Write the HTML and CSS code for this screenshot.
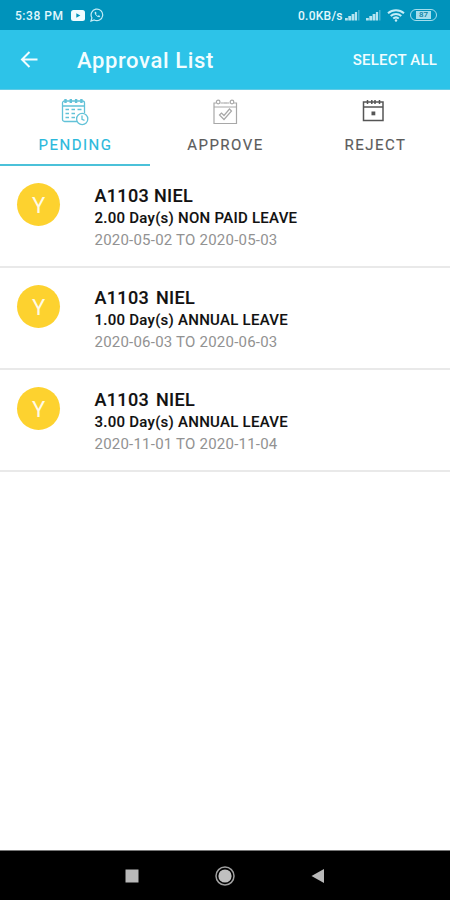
FILE: index.html
```html
<!DOCTYPE html>
<html lang="en">
<head>
<meta charset="utf-8">
<title>Approval List</title>
<link rel="stylesheet" href="styles.css">
</head>
<body>
<div class="status">
  <span class="clock">5:38 PM</span>
  <svg class="video" width="14" height="11" viewBox="0 0 14 11"><rect width="14" height="11" rx="2.5" fill="#f0fcff"/><path d="M5.3 3.2v4.6l4-2.3z" fill="#0093bb"/></svg>
  <svg class="chat" width="14" height="14" viewBox="0 0 14 14" fill="none" stroke="#c5edf7"><path d="M1 13l.9-3.2A5.8 5.8 0 1 1 4.2 12z" stroke-width="1.2"/><path d="M4.8 4.1c-.9 2 2.5 5.600 4.700 5.200l.8-1.200-1.700-.9-.8.700C6.900 7.500 6.200 6.600 6 6l.6-.8-.7-1.500z" fill="#c5edf7" stroke="none"/></svg>
  <span class="speed">0.0KB/s</span>
  <svg class="signal" width="15" height="12" viewBox="0 0 15 12" fill="#b5e4f0"><path d="M0 9h2.800v2.500H0zM3.300 7h2.800v4.500H3.300zM6.600 5h2.800v6.500H6.600zM9.900 3h2.200v8.500H9.900z"/><path d="M13 1h1.500v10.500H13z" opacity=".4"/></svg>
  <svg class="signal second" width="15" height="12" viewBox="0 0 15 12" fill="#b5e4f0"><path d="M0 9h2.800v2.500H0zM3.300 7h2.800v4.500H3.300zM6.600 5h2.800v6.500H6.600zM9.900 3h2.200v8.500H9.900z"/><path d="M13 1h1.500v10.500H13z" opacity=".4"/></svg>
  <svg class="wifi" width="18" height="13" viewBox="0 0 18 13" fill="none" stroke="#c5edf7" stroke-width="2"><path d="M1 4.300a12 12 0 0 1 16 0M3.700 7a8 8 0 0 1 10.600 0M6.200 9.600a4.200 4.200 0 0 1 5.600 0"/><circle cx="9" cy="11.500" r="1.200" fill="#c5edf7" stroke="none"/></svg>
  <span class="battery"><span class="level">87</span></span>
</div>
<header class="appbar">
  <svg class="back" width="18" height="18" viewBox="0 0 18 18" fill="none" stroke="#f2fdff" stroke-width="2"><path d="M17.500 8.500H2.500M9.500 1L2 8.500 9.500 16"/></svg>
  <h1 class="title">Approval List</h1>
  <span class="select">SELECT ALL</span>
</header>
<nav class="tabs">
  <div class="tab active">
    <svg class="icon" width="28" height="28" viewBox="0 0 28 28" fill="none" stroke="#62c2d8" stroke-width="1.300"><path d="M17 23.500H3.500a2 2 0 0 1-2-2V5a2 2 0 0 1 2-2h18a2 2 0 0 1 2 2v10M1.500 8h22"/><path d="M4.500 1v4M9.800 1v4M15.100 1v4M20.400 1v4" stroke-width="2.400"/><path d="M4.500 11.500h3.500M10.500 11.500h3.500M16.500 11.500h4M4.500 15.500h3.500M10.500 15.500h3.500M4.500 19.500h3.500M10.500 19.500h3.500" stroke-width="1.600"/><circle cx="21.200" cy="21" r="5.600" fill="#fff"/><path d="M21 17.500v3.800l2.500 1"/></svg>
    <span class="label">PENDING</span>
  </div>
  <div class="tab">
    <svg class="icon" width="28" height="28" viewBox="0 0 28 28" fill="none" stroke="#a8a8a8" stroke-width="1.200"><path d="M5 5H3v20.500h22.500V5H23M9.500 5h3M16 5h2.500M3 9h22.500"/><circle cx="7.200" cy="4" r="1.800"/><circle cx="21" cy="4" r="1.800"/><path d="M12.500 5h3.500"/><path d="M8.500 17l2-2 2.500 2.500 5.500-6.500 2 2-7.500 8.500z"/></svg>
    <span class="label">APPROVE</span>
  </div>
  <div class="tab">
    <svg class="icon reject" width="28" height="28" viewBox="0 0 28 28" fill="none" stroke="#555" stroke-width="1.500"><path d="M3.500 4h19.500v18.500H3.500zM3.500 9h19.500"/><path d="M7.500 2v4M11.800 2v4M15 2v4M19.500 2v4" stroke-width="1.500"/><rect x="11.500" y="13.500" width="3.800" height="3.800" fill="#555" stroke="none"/></svg>
    <span class="label">REJECT</span>
  </div>
</nav>
<main class="list">
  <article class="row">
    <span class="avatar">Y</span>
    <div class="info">
      <div class="name">A1103 <span>NIEL</span></div>
      <div class="leave">2.00 Day(s) NON PAID LEAVE</div>
      <div class="date">2020-05-02 TO 2020-05-03</div>
    </div>
  </article>
  <article class="row">
    <span class="avatar">Y</span>
    <div class="info">
      <div class="name wide">A1103 <span>NIEL</span></div>
      <div class="leave">1.00 Day(s) ANNUAL LEAVE</div>
      <div class="date">2020-06-03 TO 2020-06-03</div>
    </div>
  </article>
  <article class="row">
    <span class="avatar">Y</span>
    <div class="info">
      <div class="name wide">A1103 <span>NIEL</span></div>
      <div class="leave">3.00 Day(s) ANNUAL LEAVE</div>
      <div class="date">2020-11-01 TO 2020-11-04</div>
    </div>
  </article>
</main>
<footer class="navbar">
  <svg width="14" height="14" viewBox="0 0 14 14"><rect x=".5" y=".5" width="13" height="13" fill="#b9b9b9"/></svg>
  <svg width="20" height="20" viewBox="0 0 20 20"><circle cx="10" cy="10" r="9" fill="none" stroke="#a0a0a0" stroke-width="1.500"/><circle cx="10" cy="10" r="6.600" fill="#c0c0c0"/></svg>
  <svg width="14" height="16" viewBox="0 0 14 16"><path d="M13 1v14L.5 8z" fill="#b9b9b9"/></svg>
</footer>
</body>
</html>
```
FILE: styles.css
```css
* { box-sizing: border-box; }
body {
  margin: 0;
  width: 450px;
  height: 900px;
  display: flex;
  flex-direction: column;
  overflow: hidden;
  background: #fff;
  font-family: Roboto, "Liberation Sans", sans-serif;
  white-space: nowrap;
}
svg { display: block; flex: none; }
.status {
  height: 30px;
  flex: none;
  display: flex;
  align-items: center;
  padding: 0 13px 0 15px;
  background: #0093bb;
  color: #e2f8fd;
  font-size: 12px;
  font-weight: 500;
}
.clock { width: 56px; padding-top: 1px; letter-spacing: .55px; }
.chat { margin-left: 5px; }
.speed { margin-left: auto; width: 47px; padding-top: 1px; letter-spacing: .25px; }
.second { margin-left: 6px; }
.wifi { margin-left: 6px; }
.battery {
  width: 27px;
  height: 12px;
  margin-left: 5px;
  padding: 1px 5px;
  border: 1.5px solid #a5deed;
  border-radius: 6px;
}
.level {
  display: block;
  height: 8px;
  background: #a5deed;
  color: #0b7f9e;
  font-size: 8px;
  line-height: 8px;
  text-align: center;
}
.appbar {
  height: 60px;
  flex: none;
  display: flex;
  align-items: center;
  padding: 0 13px 0 20px;
  background: #2dc3e8;
  border-bottom: 1px solid #62cbe5;
  color: #f2fdff;
}
.title {
  margin: 2px 0 0 39px;
  font-size: 22px;
  font-weight: 500;
  letter-spacing: .62px;
}
.select { margin-left: auto; font-size: 15px; font-weight: 500; letter-spacing: .18px; }
.tabs { height: 76px; flex: none; display: flex; }
.tab {
  width: 150px;
  padding: 8px 0 0 1px;
  display: flex;
  flex-direction: column;
  align-items: center;
  border-bottom: 2px solid transparent;
  color: #5c5c5c;
}
.active { color: #2ab9dc; border-bottom-color: #4bc1d9; }
.icon { margin-right: 2px; }
.reject { margin-right: 4px; }
.label {
  margin-top: 10px;
  font-size: 15px;
  line-height: 18px;
  letter-spacing: 1.5px;
  -webkit-text-stroke: .15px currentColor;
}
.row {
  height: 102px;
  display: flex;
  padding: 17px 0 0 17px;
  border-bottom: 2px solid #e9e9e9;
}
.avatar {
  width: 43px;
  height: 43px;
  border-radius: 50%;
  background: #fdd22f;
  color: #fffbe8;
  font-size: 22px;
  line-height: 45px;
  text-align: center;
}
.info { margin-left: 34.5px; color: #111; }
.name {
  font-size: 18px;
  line-height: 25px;
  font-weight: 500;
  letter-spacing: .35px;
  -webkit-text-stroke: .15px currentColor;
}
.wide span { margin-left: 2px; }
.leave {
  font-size: 15px;
  line-height: 21px;
  font-weight: 500;
  letter-spacing: .26px;
  -webkit-text-stroke: .1px currentColor;
}
.date { font-size: 15px; line-height: 22px; color: #929292; letter-spacing: .22px; }
.navbar {
  height: 50px;
  flex: none;
  margin-top: auto;
  display: flex;
  align-items: center;
  padding-left: 125px;
  border-top: 1px solid #777;
  background: #000;
  gap: 76px;
}
```
